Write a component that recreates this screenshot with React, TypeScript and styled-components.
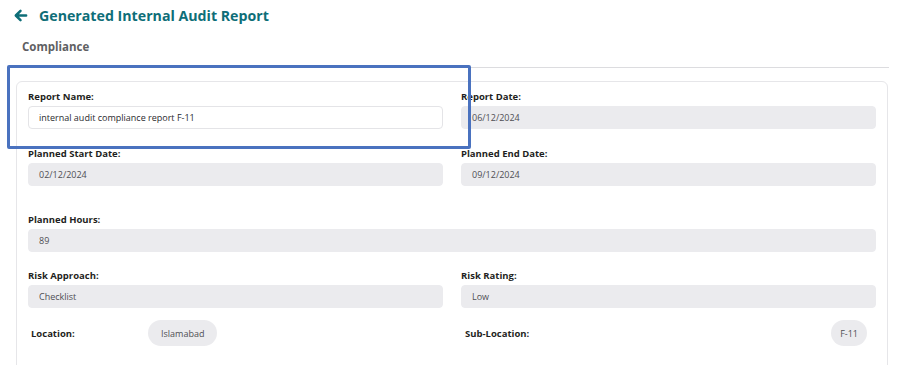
import React from "react";
import styled, { createGlobalStyle } from "styled-components";

const Global = createGlobalStyle`
  html, body { margin: 0; padding: 0; background: #ffffff; }
  body { font-family: "Open Sans", "Noto Sans", sans-serif; }
  * { box-sizing: border-box; }
`;

const Page = styled.div`
  position: relative;
  width: 903px;
  height: 365px;
  overflow: hidden;
  padding: 0 15px 0 16px;
`;

const Header = styled.div`
  display: flex;
  align-items: center;
  gap: 11px;
  height: 30px;
  margin-left: -3px;
`;

const Title = styled.h1`
  margin: 0;
  font-size: 14.2px;
  font-weight: 700;
  color: #0e6e78;
`;

const SubTitle = styled.div`
  margin: 9px 0 0 6px;
  font-size: 11.5px;
  font-weight: 700;
  color: #5f5f63;
`;

const Divider = styled.div`
  margin-top: 13px;
  height: 1px;
  background: #dcdcdf;
  margin-right: -1px;
`;

const Card = styled.div`
  margin-top: 13px;
  border: 1px solid #e6e6e9;
  border-radius: 6px;
  padding: 8px 11px 30px 11px;
  display: grid;
  grid-template-columns: 1fr 1fr;
  column-gap: 18px;
`;

const Field = styled.div<{ $full?: boolean; $mt?: number }>`
  grid-column: ${(p) => (p.$full ? "1 / -1" : "auto")};
  margin-top: ${(p) => p.$mt ?? 0}px;
  display: flex;
  flex-direction: column;
`;

const Label = styled.label`
  font-size: 9.5px;
  font-weight: 700;
  color: #1f1f22;
  line-height: 13px;
  margin-bottom: 3px;
`;

const Input = styled.div<{ $editable?: boolean }>`
  height: 23px;
  border-radius: 4px;
  padding: 0 10px;
  display: flex;
  align-items: center;
  font-size: 9px;
  color: ${(p) => (p.$editable ? "#2a2a2e" : "#4f4f54")};
  background: ${(p) => (p.$editable ? "#ffffff" : "#ebebee")};
  border: 1px solid ${(p) => (p.$editable ? "#e4e4e7" : "#ebebee")};
`;

const InlineRow = styled.div<{ $left?: number }>`
  display: flex;
  align-items: center;
  margin-top: 12px;
  padding-left: ${(p) => p.$left ?? 3}px;
`;

const InlineLabel = styled.span<{ $width?: number }>`
  font-size: 9.5px;
  font-weight: 700;
  color: #1f1f22;
  width: ${(p) => (p.$width ? `${p.$width}px` : "auto")};
  flex: ${(p) => (p.$width ? "none" : "1")};
`;

const Pill = styled.span<{ $mr?: number; $px?: number }>`
  display: inline-flex;
  align-items: center;
  height: 26px;
  padding: 0 ${(p) => p.$px ?? 9}px;
  border-radius: 13px;
  background: #ebebee;
  font-size: 9px;
  color: #4f4f54;
  margin-right: ${(p) => p.$mr ?? 0}px;
`;

const Highlight = styled.div`
  position: absolute;
  left: 7px;
  top: 65px;
  width: 464px;
  height: 84px;
  border: 3px solid #4a72bf;
  border-radius: 2px;
  pointer-events: none;
`;

const Back = styled.svg`
  width: 15px;
  height: 15px;
  flex: none;
`;

export default function App() {
  return (
    <>
      <Global />
      <Page>
        <Header>
          <Back viewBox="0 0 24 24" fill="none">
            <path
              d="M21 12H5M12 4.5l-7.5 7.5 7.5 7.5"
              stroke="#0e6e78"
              strokeWidth={4}
              strokeLinecap="round"
              strokeLinejoin="round"
            />
          </Back>
          <Title>Generated Internal Audit Report</Title>
        </Header>
        <SubTitle>Compliance</SubTitle>
        <Divider />
        <Card>
          <Field>
            <Label>Report Name:</Label>
            <Input $editable>internal audit compliance report F-11</Input>
          </Field>
          <Field>
            <Label>Report Date:</Label>
            <Input>06/12/2024</Input>
          </Field>
          <Field $mt={18}>
            <Label>Planned Start Date:</Label>
            <Input>02/12/2024</Input>
          </Field>
          <Field $mt={18}>
            <Label>Planned End Date:</Label>
            <Input>09/12/2024</Input>
          </Field>
          <Field $full $mt={27}>
            <Label>Planned Hours:</Label>
            <Input>89</Input>
          </Field>
          <Field $mt={17}>
            <Label>Risk Approach:</Label>
            <Input>Checklist</Input>
          </Field>
          <Field $mt={17}>
            <Label>Risk Rating:</Label>
            <Input>Low</Input>
          </Field>
          <InlineRow>
            <InlineLabel $width={117}>Location:</InlineLabel>
            <Pill $px={13}>Islamabad</Pill>
          </InlineRow>
          <InlineRow $left={4}>
            <InlineLabel>Sub-Location:</InlineLabel>
            <Pill $mr={9}>F-11</Pill>
          </InlineRow>
        </Card>
        <Highlight />
      </Page>
    </>
  );
}
